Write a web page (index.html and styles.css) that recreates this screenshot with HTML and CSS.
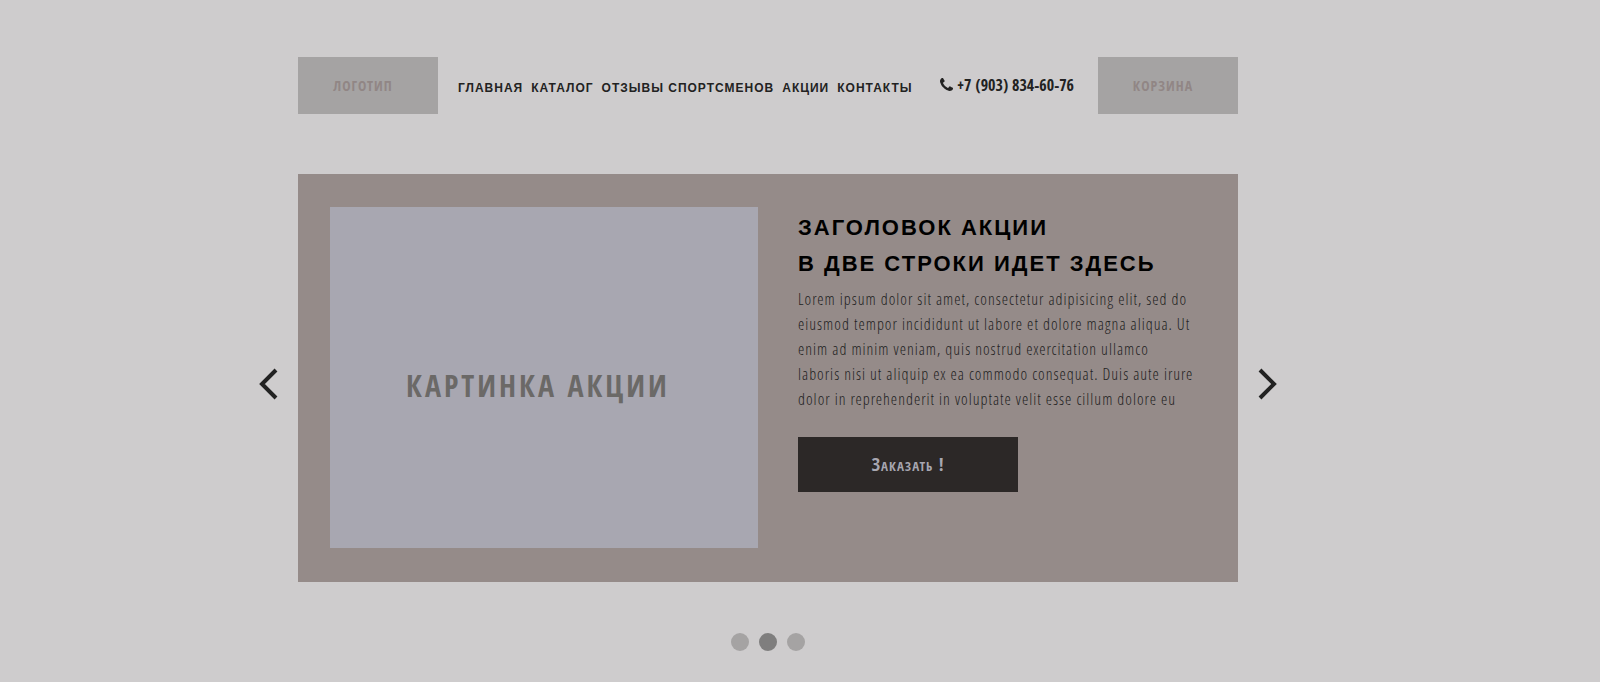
FILE: index.html
```html
<!DOCTYPE html>
<html lang="ru">
<head>
  <meta charset="UTF-8">
  <meta name="viewport" content="width=device-width, initial-scale=1.0">
  <title>Главная</title>
  <link rel="stylesheet" href="styles.css">
</head>
<body>
  <div class="page">
    <!-- Header -->
    <header class="header">
      <a class="box logo" href="#">ЛОГОТИП</a>
      <nav class="menu">
        <a href="#">ГЛАВНАЯ</a>
        <a href="#">КАТАЛОГ</a>
        <a href="#">ОТЗЫВЫ СПОРТСМЕНОВ</a>
        <a href="#">АКЦИИ</a>
        <a href="#">КОНТАКТЫ</a>
      </nav>
      <a class="phone" href="tel:+79038346076">
        <svg class="phone-icon" viewBox="0 0 1408 1408" aria-hidden="true">
          <path d="M1408 1112q0 27-10 70.500t-21 68.500q-21 50-122 106-94 51-186 51-27 0-53-3.500t-57.500-12.500-47-14.500-55.500-20.500-49-18q-98-35-175-83-127-79-264-216t-216-264q-48-77-83-175-3-9-18-49t-20.500-55.500-14.500-47-12.500-57.500-3.500-53q0-92 51-186 56-101 106-122 25-11 68.500-21t70.500-10q14 0 21 3 18 6 53 76 11 19 30 54t35 63.500 31 53.500q3 4 17.500 25t21.500 35.500 7 28.500q0 20-28.500 50t-62 55-62 53-28.500 46q0 9 5 22.500t8.500 20.500 14 24 11.500 19q76 137 174 235t235 174q2 1 19 11.500t24 14 20.500 8.500 22.500 5q18 0 46-28.500t53-62 55-62 50-28.500q14 0 28.500 7t35.500 21.500 25 17.500q25 15 53.500 31t63.500 35 54 30q70 35 76 53 3 7 3 21z"/>
        </svg>
        +7 (903) 834-60-76
      </a>
      <a class="box cart" href="#">КОРЗИНА</a>
    </header>

    <!-- Slider -->
    <main class="slider">
      <button class="arrow" type="button" aria-label="Назад">
        <svg viewBox="0 0 20 32"><path d="M18 2 4 16l14 14"/></svg>
      </button>
      <section class="slide">
        <div class="slide-image">КАРТИНКА АКЦИИ</div>
        <div class="slide-content">
          <h1>ЗАГОЛОВОК АКЦИИ<br>В ДВЕ СТРОКИ ИДЕТ ЗДЕСЬ</h1>
          <p>Lorem ipsum dolor sit amet, consectetur adipisicing elit, sed do<br>
            eiusmod tempor incididunt ut labore et dolore magna aliqua. Ut<br>
            enim ad minim veniam, quis nostrud exercitation ullamco<br>
            laboris nisi ut aliquip ex ea commodo consequat. Duis aute irure<br>
            dolor in reprehenderit in voluptate velit esse cillum dolore eu</p>
          <button class="btn" type="button">Заказать !</button>
        </div>
      </section>
      <button class="arrow" type="button" aria-label="Вперед">
        <svg viewBox="0 0 20 32"><path d="m2 2 14 14L2 30"/></svg>
      </button>
    </main>

    <!-- Slider dots -->
    <div class="dots">
      <button type="button" aria-label="Слайд 1"></button>
      <button class="active" type="button" aria-label="Слайд 2"></button>
      <button type="button" aria-label="Слайд 3"></button>
    </div>
  </div>
</body>
</html>
```
FILE: styles.css
```css
* {
  margin: 0;
  padding: 0;
  box-sizing: border-box;
}

body {
  font-family: "Open Sans Condensed", "Open Sans", sans-serif;
  background: #cecccd;
  color: #222;
  padding: 57px 64px 0 0;
}

a {
  color: inherit;
  text-decoration: none;
}

button {
  border: none;
  background: none;
  font-family: inherit;
  cursor: pointer;
}

.page {
  max-width: 1026px;
  margin: 0 auto;
}

/* Header */
.header {
  display: flex;
  align-items: center;
  padding: 0 43px;
}

.box {
  display: flex;
  align-items: center;
  justify-content: center;
  width: 140px;
  height: 57px;
  padding-right: 10px;
  background: #a5a3a3;
  color: #918685;
  font-size: 14px;
  font-weight: bold;
  letter-spacing: 1px;
}

.menu {
  display: flex;
  gap: 8px;
  padding: 4px 0 0 20px;
  font-family: "Liberation Sans", Arial, sans-serif;
  font-size: 12px;
  font-weight: bold;
  letter-spacing: 1px;
  white-space: nowrap;
}

.phone {
  display: flex;
  align-items: center;
  gap: 4px;
  margin: 0 24px 0 auto;
  padding-bottom: 2px;
  font-size: 16px;
  font-weight: bold;
  white-space: nowrap;
}

.phone-icon {
  width: 13px;
  height: 13px;
  fill: #222;
}

/* Slider */
.slider {
  display: flex;
  align-items: center;
  justify-content: space-between;
  margin-top: 60px;
}

.arrow {
  width: 26px;
  margin-top: 12px;
}

.arrow svg {
  display: block;
  width: 20px;
  height: 32px;
  margin: 0 auto;
  fill: none;
  stroke: #222;
  stroke-width: 4;
}

.slide {
  display: flex;
  gap: 40px;
  width: 940px;
  padding: 33px 32px 34px;
  background: #958b89;
}

.slide-image {
  display: flex;
  align-items: center;
  justify-content: center;
  width: 428px;
  height: 341px;
  padding: 16px 12px 0 0;
  background: #a8a7b1;
  color: #6b6967;
  font-size: 30px;
  font-weight: bold;
  letter-spacing: 3px;
}

.slide-content {
  flex: 1;
  padding-top: 3px;
  white-space: nowrap;
}

.slide-content h1 {
  color: #000;
  font-family: "Liberation Sans", Arial, sans-serif;
  font-size: 22px;
  line-height: 36px;
  letter-spacing: 2px;
}

.slide-content p {
  margin-top: 5px;
  color: #222;
  font-family: "Open Sans Condensed Light", "Open Sans Condensed", "Open Sans", sans-serif;
  font-size: 16px;
  font-weight: 300;
  line-height: 25px;
  letter-spacing: 1px;
}

.btn {
  width: 220px;
  height: 55px;
  margin-top: 25px;
  padding-bottom: 2px;
  background: #2c2827;
  color: #a8a7b1;
  font-size: 18px;
  font-weight: bold;
  font-variant: small-caps;
  letter-spacing: 1px;
}

/* Dots */
.dots {
  display: flex;
  justify-content: center;
  gap: 10px;
  margin-top: 51px;
}

.dots button {
  width: 18px;
  height: 18px;
  border-radius: 50%;
  background: #a5a3a3;
}

.dots .active {
  background: #7f7e7e;
}
```
